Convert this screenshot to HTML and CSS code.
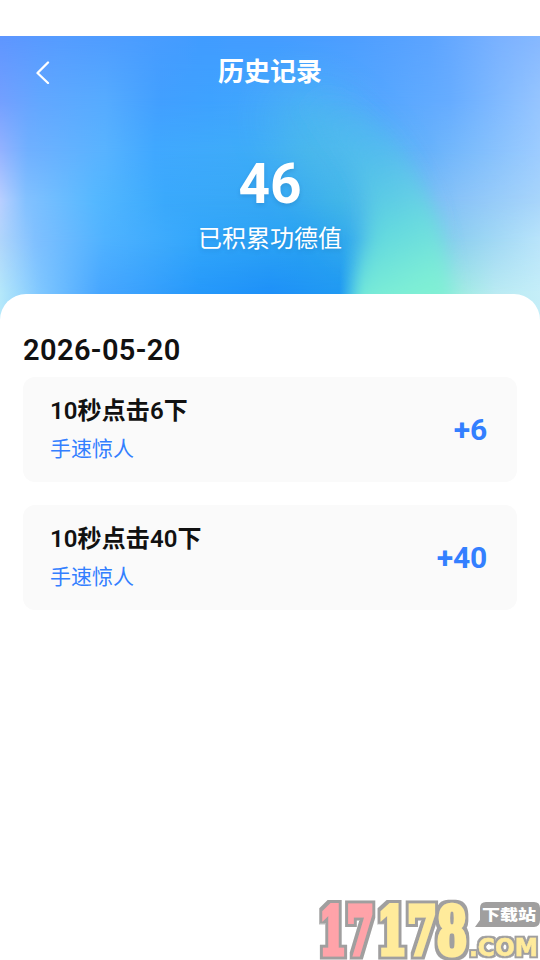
FILE: index.html
```html
<!DOCTYPE html>
<html lang="zh-CN">
<head>
<meta charset="utf-8">
<title>历史记录</title>
<link rel="stylesheet" href="styles.css">
</head>
<body>
<main class="app">
  <header class="hero">
    <div class="wash" aria-hidden="true">
      <i class="band band-1"></i><i class="band band-2"></i><i class="band band-3"></i><i class="band band-4"></i><i class="band band-5"></i><i class="band band-6"></i>
      <svg class="glow" viewBox="0 0 540 284">
        <defs>
          <linearGradient id="teal" gradientUnits="userSpaceOnUse" x1="320" y1="40" x2="420" y2="258">
            <stop offset="0" stop-color="#4cb9ef" stop-opacity="0"/>
            <stop offset=".35" stop-color="#52c3ea" stop-opacity=".4"/>
            <stop offset=".7" stop-color="#65dfdc" stop-opacity=".75"/>
            <stop offset="1" stop-color="#80f0d4"/>
          </linearGradient>
          <filter id="soft" x="-30%" y="-30%" width="160%" height="160%"><feGaussianBlur stdDeviation="9"/></filter>
          <filter id="haze" x="-60%" y="-60%" width="220%" height="220%"><feGaussianBlur stdDeviation="24"/></filter>
        </defs>
        <path d="M290 50C340 60 380 105 405 154L420 210H360C340 170 310 120 270 90Z" fill="#4fc4e4" opacity=".45" filter="url(#haze)"/>
        <path d="M320 50C365 65 401 105 425 154S448 230 454 310H357C353 245 368 220 368 180S345 120 300 70Z" fill="url(#teal)" filter="url(#soft)"/>
      </svg>
    </div>
    <nav class="bar">
      <svg class="back" viewBox="0 0 16 24"><path d="M13 2.5 2.5 13 13 23" fill="none" stroke="#fff" stroke-width="2.3" stroke-linecap="round" stroke-linejoin="round"/></svg>
      <h1 class="title">历史记录</h1>
    </nav>
    <div class="total">46</div>
    <div class="caption">已积累功德值</div>
  </header>
  <section class="sheet">
    <h2 class="date">2026-05-20</h2>
    <article class="card">
      <div class="info"><h3 class="name">10秒点击6下</h3><p class="tag">手速惊人</p></div>
      <strong class="gain">+6</strong>
    </article>
    <article class="card">
      <div class="info"><h3 class="name">10秒点击40下</h3><p class="tag">手速惊人</p></div>
      <strong class="gain">+40</strong>
    </article>
  </section>
  <svg class="mark" viewBox="0 0 230 70">
    <defs>
      <filter id="rim" x="-10%" y="-20%" width="120%" height="140%">
        <feMorphology in="SourceAlpha" operator="dilate" radius="3" result="fat"/>
        <feFlood flood-color="#a09f9f"/><feComposite in2="fat" operator="in" result="edge"/>
        <feMerge><feMergeNode in="edge"/><feMergeNode in="SourceGraphic"/></feMerge>
      </filter>
      <filter id="rim-thin" x="-10%" y="-20%" width="120%" height="140%">
        <feMorphology in="SourceAlpha" operator="dilate" radius="2" result="fat"/>
        <feFlood flood-color="#a09f9f"/><feComposite in2="fat" operator="in" result="edge"/>
        <feMerge><feMergeNode in="edge"/><feMergeNode in="SourceGraphic"/></feMerge>
      </filter>
    </defs>
    <g class="digits" filter="url(#rim)">
      <text class="pink" x="9" y="64" textLength="55" lengthAdjust="spacingAndGlyphs">17</text>
      <text class="gold" x="67" y="64" textLength="90" lengthAdjust="spacingAndGlyphs">178</text>
    </g>
    <path d="M165 37 170 30V18Q170 12 176 12H224Q230 12 230 18V30Q230 37 224 37Z" fill="#a09f9f"/>
    <text class="site" x="172" y="30" textLength="54" lengthAdjust="spacingAndGlyphs">下载站</text>
    <text class="com" x="159" y="66" textLength="69" lengthAdjust="spacingAndGlyphs" filter="url(#rim-thin)">.COM</text>
  </svg>
</main>
</body>
</html>
```
FILE: styles.css
```css
* { box-sizing: border-box; }
body { margin: 0; background: #fff; font-family: Roboto, "Noto Sans CJK SC", sans-serif; }
h1, h2, h3, p { margin: 0; }
.app { position: relative; height: 960px; padding-top: 36px; overflow: hidden; }
.hero { position: relative; height: 284px; color: #fff; text-align: center; }
.wash { position: absolute; inset: 0; overflow: hidden; }
.band { position: absolute; inset: 0; }
.glow { position: absolute; inset: 0; width: 540px; height: 284px; }
.band-1 { background: linear-gradient(90deg, #5e96ff 0, #559cff 60px, #4c9dff 130px, #419cff 200px, #439cff 270px, #4d9eff 350px, #5ca4ff 430px, #7bb2ff 500px, #86b8ff 540px); }
.band-2 { background: linear-gradient(90deg, #739fff 0, #62a7ff 40px, #56abff 105px, #429fff 160px, #3ea2ff 210px, #48a9fc 300px, #55a6ff 380px, #66acff 450px, #96c5ff 540px); mask-image: linear-gradient(transparent 0, #000 64px); }
.band-3 { background: linear-gradient(90deg, #94b2ff 0, #70b0ff 28px, #58b3ff 105px, #40a8ff 155px, #3eacf8 250px, #47b2f0 310px, #55aff8 380px, #68b2fb 430px, #9dccff 540px); mask-image: linear-gradient(transparent 64px, #000 114px); }
.band-4 { background: linear-gradient(90deg, #b9cfff 0, #83c1ff 26px, #55b8ff 95px, #3aa9fc 165px, #36a7f4 270px, #3db1ea 340px, #68b7f3 400px, #82bff7 440px, #a8d5fb 540px); mask-image: linear-gradient(transparent 114px, #000 164px); }
.band-5 { background: linear-gradient(90deg, #b0d5fb 0, #80c0ff 35px, #4fb2ff 105px, #32a6fb 200px, #29a2f2 300px, #2ea6ee 345px, #63c6ea 390px, #8cceef 455px, #b9e4fb 540px); mask-image: linear-gradient(transparent 164px, #000 204px); }
.band-6 { background: linear-gradient(90deg, #b5e8fa 0, #7fc7ff 40px, #47a6ff 100px, #2598fa 200px, #1e90f8 270px, #2099f2 340px, #62dcdf 365px, #a0ebe2 460px, #b9eaf2 495px, #c5eef8 540px); mask-image: linear-gradient(transparent 204px, #000 258px); }
.bar { position: relative; display: flex; align-items: center; height: 72px; padding: 0 35px; }
.back { width: 16px; height: 24px; }
.title { flex: 1; margin-right: 16px; font-size: 26px; line-height: 36px; font-weight: 700; }
.total { position: relative; margin-top: 45px; font-size: 55px; line-height: 62px; font-weight: 700; text-shadow: 0 2px 4px rgba(0, 50, 100, .15); }
.caption { position: relative; margin-top: 6px; font-size: 24px; line-height: 36px; text-shadow: 0 2px 4px rgba(0, 50, 100, .15); }
.sheet { position: relative; height: 666px; margin-top: -26px; padding: 35px 23px 0; border-radius: 26px 26px 0 0; background: #fff; color: #111; }
.date { height: 48px; font-size: 29px; line-height: 42px; font-weight: 600; letter-spacing: .4px; }
.card { display: flex; align-items: center; justify-content: space-between; height: 105px; margin-bottom: 23px; padding: 0 30px 0 27px; border-radius: 12px; background: #fafafa; }
.info { margin-top: -2px; }
.name { font-size: 24px; line-height: 36px; font-weight: 600; letter-spacing: .1px; }
.tag { margin-top: 4px; font-size: 21px; line-height: 32px; color: #337fff; }
.gain { font-size: 30px; line-height: 40px; font-weight: 700; letter-spacing: -.2px; color: #337fff; }
.mark { position: absolute; left: 310px; top: 890px; width: 230px; height: 70px; }
.digits { font: 700 65px "DejaVu Serif", serif; stroke-width: 5px; }
.pink { fill: #ffa3a9; stroke: #ffa3a9; }
.gold { fill: #ffeb9b; stroke: #ffeb9b; }
.site { font: 900 15px "Noto Sans CJK SC", sans-serif; fill: #fff; }
.com { font: 700 24px "DejaVu Sans", sans-serif; fill: #ffeb9b; stroke: #ffeb9b; stroke-width: .5px; }
```
